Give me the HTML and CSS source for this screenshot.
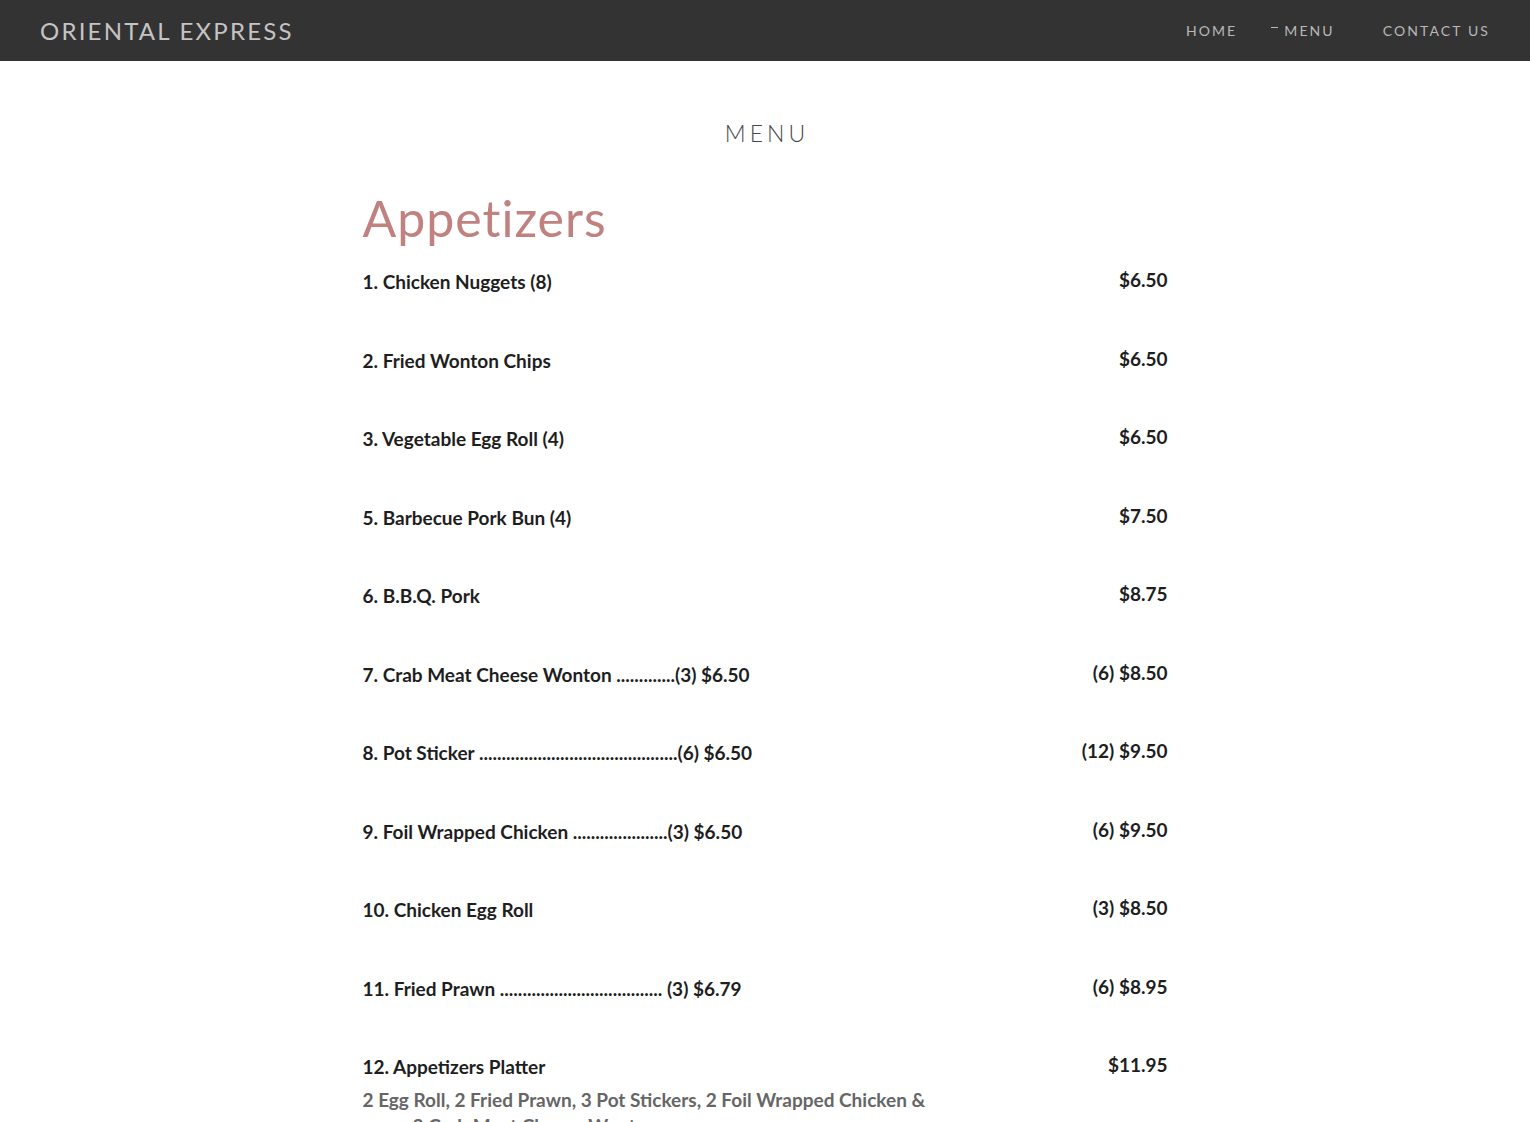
FILE: index.html
```html
<!DOCTYPE html>
<html lang="en">
<head>
<meta charset="utf-8">
<title>Menu - Oriental Express</title>
<link rel="stylesheet" href="styles.css">
</head>
<body>
<header class="topbar">
  <div class="brand">ORIENTAL EXPRESS</div>
  <nav class="nav">
    <a class="nav-link" href="#">HOME</a>
    <a class="nav-link nav-active" href="#"><span class="dash"></span>MENU</a>
    <a class="nav-link" href="#">CONTACT US</a>
  </nav>
</header>
<main class="page">
  <h1 class="page-title">MENU</h1>
  <section class="menu">
    <h2 class="section-title">Appetizers</h2>
    <div class="item"><span class="name">1. Chicken Nuggets (8)</span><span class="price">$6.50</span></div>
    <div class="item"><span class="name">2. Fried Wonton Chips</span><span class="price">$6.50</span></div>
    <div class="item"><span class="name">3. Vegetable Egg Roll (4)</span><span class="price">$6.50</span></div>
    <div class="item"><span class="name">5. Barbecue Pork Bun (4)</span><span class="price">$7.50</span></div>
    <div class="item"><span class="name">6. B.B.Q. Pork</span><span class="price">$8.75</span></div>
    <div class="item"><span class="name">7. Crab Meat Cheese Wonton .............(3) $6.50</span><span class="price">(6) $8.50</span></div>
    <div class="item"><span class="name">8. Pot Sticker ............................................(6) $6.50</span><span class="price">(12) $9.50</span></div>
    <div class="item"><span class="name">9. Foil Wrapped Chicken .....................(3) $6.50</span><span class="price">(6) $9.50</span></div>
    <div class="item"><span class="name">10. Chicken Egg Roll</span><span class="price">(3) $8.50</span></div>
    <div class="item"><span class="name">11. Fried Prawn .................................... (3) $6.79</span><span class="price">(6) $8.95</span></div>
    <div class="item item-last">
      <div class="item-main">
        <span class="name">12. Appetizers Platter</span>
        <p class="desc">2 Egg Roll, 2 Fried Prawn, 3 Pot Stickers, 2 Foil Wrapped Chicken &amp;<br><span class="indent">2 Crab Meat Cheese Wonton</span></p>
      </div>
      <span class="price">$11.95</span>
    </div>
  </section>
</main>
</body>
</html>
```
FILE: styles.css
```css
html, body {
  margin: 0;
  padding: 0;
  background: #ffffff;
}
body {
  font-family: "Lato", "Open Sans", sans-serif;
  color: #1e1e1e;
  overflow: hidden;
  height: 1122px;
}
.topbar {
  height: 61px;
  background: #333333;
  display: flex;
  align-items: center;
  justify-content: space-between;
  padding: 0 40px 1px 40px;
  box-sizing: border-box;
}
.brand {
  font-family: "Lato", sans-serif;
  font-weight: 400;
  font-size: 24px;
  letter-spacing: 2.2px;
  color: #c4c4c4;
}
.nav {
  display: flex;
  align-items: center;
}
.nav-link {
  font-family: "Lato", sans-serif;
  font-size: 14px;
  letter-spacing: 2.1px;
  color: #b8b8b8;
  text-decoration: none;
  margin-left: 48px;
  display: flex;
  align-items: center;
}
.nav-active {
  margin-left: 34px;
}
.dash {
  display: inline-block;
  width: 7px;
  height: 1px;
  background: #b8b8b8;
  margin-right: 6px;
  position: relative;
  top: -3px;
}
.page {
  width: 805px;
  margin: 0 auto;
}
.page-title {
  margin: 0;
  padding-top: 57px;
  text-align: center;
  font-family: "Lato", sans-serif;
  font-weight: 300;
  font-size: 23px;
  letter-spacing: 4px;
  color: #4a4a4a;
  line-height: 30px;
  padding-left: 4px;
}
.section-title {
  margin: 40px 0 19px 0;
  font-family: "Lato", sans-serif;
  font-weight: 400;
  font-size: 50px;
  line-height: 60px;
  letter-spacing: 1px;
  color: #c0817f;
}
.item {
  display: flex;
  justify-content: space-between;
  align-items: flex-start;
  height: 78.5px;
}
.name {
  font-family: "Lato", sans-serif;
  font-weight: 700;
  font-size: 19px;
  line-height: 26px;
  color: #1e1e1e;
  padding-top: 2px;
}
.price {
  font-family: "Lato", sans-serif;
  font-weight: 700;
  font-size: 19px;
  line-height: 26px;
  color: #1e1e1e;
}
.item-last {
  height: auto;
}
.item-main {
  display: flex;
  flex-direction: column;
}
.desc {
  margin: 7px 0 0 0;
  font-family: "Lato", sans-serif;
  font-weight: 700;
  font-size: 19px;
  line-height: 26px;
  color: #666666;
}
.indent {
  padding-left: 50px;
}
```
